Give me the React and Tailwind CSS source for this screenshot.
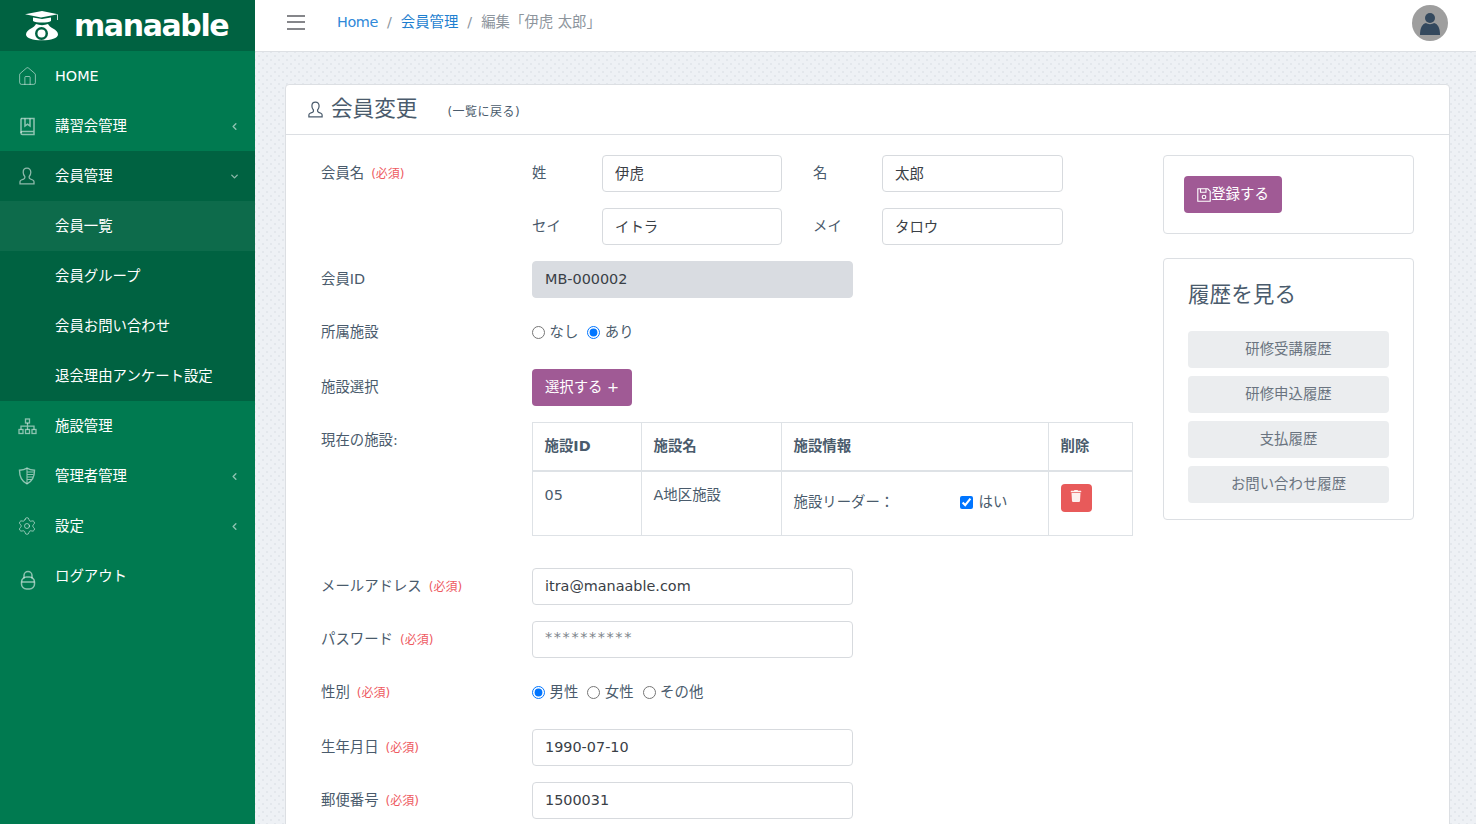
import React from 'react';
import { House, Settings, ChevronLeft, ChevronDown } from 'lucide-react';
import { FaTrash } from 'react-icons/fa';

const BookIcon = () => (
    <svg width="18" height="19" viewBox="0 0 18 19" fill="none" stroke="currentColor" strokeWidth="1.500">
        <path d="M3 1.500h13v13H4.500A1.500 1.500 0 0 0 3 16a1.500 1.500 0 0 0 1.500 1.500H16V15" />
        <path d="M3 1.500V16" />
        <path d="M7 1.500v7.500l2.500-1.800L12 9V1.500" />
    </svg>
);

const SitemapIcon = () => (
    <svg width="19" height="17" viewBox="0 0 19 17" fill="none" stroke="currentColor" strokeWidth="1.300">
        <rect x="7.500" y="1" width="4" height="4" />
        <rect x="1" y="11.500" width="4" height="4" />
        <rect x="7.500" y="11.500" width="4" height="4" />
        <rect x="14" y="11.500" width="4" height="4" />
        <path d="M9.500 5v6.500M3 11.500V8.200h13v3.300" />
    </svg>
);

const UserIcon = ({ size = 18 }) => (
    <svg width={size} height={size} viewBox="0 0 18 18" fill="none" stroke="currentColor" strokeWidth="1.300">
        <path d="M9 1.200c-2.400 0-3.800 1.700-3.800 4 0 2 .8 3.400 1.600 4.300v1.300c0 .6-.5 1-1.200 1.300L3.300 13c-.9.400-1.300 1-1.300 1.800v2h14v-2c0-.8-.4-1.400-1.300-1.800l-2.300-1c-.7-.3-1.200-.7-1.200-1.300V9.500c.8-.9 1.600-2.300 1.600-4.300 0-2.300-1.400-4-3.800-4z" />
    </svg>
);

const ShieldIcon = () => (
    <svg width="18" height="18" viewBox="0 0 18 18" fill="none" stroke="currentColor" strokeWidth="1.400">
        <path d="M9 1.200c2 1.300 4.500 2 7.500 2.100 0 6.500-1.800 11-7.500 13.500C3.300 14.300 1.500 9.800 1.500 3.300 4.500 3.200 7 2.500 9 1.200z" />
        <path d="M9 1.200v15.600M9 5h6.500M9 7.500h6.300M9 10h5.700M9 12.500h4.300" strokeWidth="1.100" />
    </svg>
);

const LockIcon = () => (
    <svg width="20" height="20" viewBox="0 0 20 20" fill="none" stroke="currentColor" strokeWidth="1.500" className="mt-[8px]">
        <rect x="3.500" y="7" width="13" height="12" rx="5" />
        <path d="M6 8.500V5.500a4 4 0 0 1 8 0v3M3.500 12h13" />
    </svg>
);

const SaveIcon = () => (
    <svg width="14" height="14" viewBox="0 0 14 14" fill="none" stroke="currentColor" strokeWidth="1.100" className="shrink-0">
        <path d="M.8.800h10l2.400 2.400v10H.8z" />
        <path d="M3.500.8v3.400h5.500V.8" />
        <circle cx="7" cy="9" r="1.800" />
    </svg>
);

const LogoMark = () => (
    <svg width="36" height="30" viewBox="0 0 36 30" fill="white">
        <path d="M1 3.200 18 0l16 3.200-17 3.300z" />
        <path d="M33 3.500h.8v5.500h-.8z" />
        <path d="M9 6.500 18 8l9-1.500V10c-3 2-15 2-18 0z" />
        <path d="M12 13c3.500 1.500 8.500 1.500 12 0 1 2 2.500 3 5 4.500 3 1.700 5 3.500 5 6 0 3.800-7 5.800-16 5.800S2 27.300 2 23.500c0-2.500 2-4.300 5-6 2.500-1.500 4-2.500 5-4.500z" />
        <circle cx="17.500" cy="22.500" r="6.500" fill="#006241" />
        <circle cx="17.500" cy="22.500" r="4" fill="white" />
    </svg>
);

const menuTop = [
    { label: 'HOME', icon: <House size={21} strokeWidth={1.100} className="-ml-[1px]" /> },
    { label: '講習会管理', icon: <BookIcon />, arrow: true },
];

const menuBottom = [
    { label: '施設管理', icon: <SitemapIcon /> },
    { label: '管理者管理', icon: <ShieldIcon />, arrow: true },
    { label: '設定', icon: <Settings size={20} strokeWidth={1.200} className="-ml-[1px]" />, arrow: true },
    { label: 'ログアウト', icon: <LockIcon /> },
];

const subMenu = ['会員一覧', '会員グループ', '会員お問い合わせ', '退会理由アンケート設定'];

const MenuItem = ({ item }) => (
    <div className="h-[50px] flex items-center text-white">
        <span className="w-[55px] pl-[18px] text-white/55 flex items-center">{item.icon}</span>
        <span className="flex-1 pt-[2px]">{item.label}</span>
        {item.arrow && <ChevronLeft size={11} strokeWidth={3} className="text-white/55 mr-[15px]" />}
    </div>
);

const Sidebar = () => (
    <aside className="w-[255px] shrink-0 bg-[#007a50] flex flex-col">
        <div className="h-[51px] bg-[#006241] flex items-center pl-[24px] gap-[14px]">
            <LogoMark />
            <span className="text-[30px] leading-none font-bold tracking-[-1.400px] text-white">manaable</span>
        </div>
        {menuTop.map(item => <MenuItem key={item.label} item={item} />)}
        <div className="bg-[#006241]">
            <div className="h-[50px] flex items-center text-white">
                <span className="w-[55px] pl-[18px] text-white/55 flex items-center"><UserIcon /></span>
                <span className="flex-1 pt-[2px]">会員管理</span>
                <ChevronDown size={11} strokeWidth={3} className="text-white/55 mr-[15px]" />
            </div>
            {subMenu.map((label, i) => (
                <div key={label} className={`h-[50px] flex items-center pl-[55px] pt-[2px] text-white ${i === 0 ? 'bg-[#0d6b4b]' : ''}`}>
                    {label}
                </div>
            ))}
        </div>
        {menuBottom.map(item => <MenuItem key={item.label} item={item} />)}
    </aside>
);

const Header = () => (
    <header className="h-[52px] shrink-0 bg-white border-b border-[#dde0e4] flex items-center">
        <div className="ml-[32px] w-[18px] flex flex-col gap-[4.500px] -mt-[7px]">
            <span className="h-[2px] bg-[#85868a]" />
            <span className="h-[2px] bg-[#85868a]" />
            <span className="h-[2px] bg-[#85868a]" />
        </div>
        <nav className="ml-[32px] flex items-center gap-[9px] -mt-[6px] text-[#8d959d]">
            <span className="text-[#2f88d8] tracking-[-0.400px]">Home</span>
            <span>/</span>
            <span className="text-[#1e7fd0]">会員管理</span>
            <span>/</span>
            <span>編集「伊虎 太郎」</span>
        </nav>
        <div className="ml-auto mr-[28px] -mt-[6px] w-[36px] h-[36px] rounded-full bg-[#9e9e9e] flex items-center justify-center overflow-hidden">
            <svg width="22" height="24" viewBox="0 0 22 24" fill="#34495e">
                <circle cx="11" cy="7" r="5" />
                <path d="M1 24c0-7 2-11 6-12 2 1.500 6 1.500 8 0 4 1 6 5 6 12z" />
            </svg>
        </div>
    </header>
);

const Required = () => <span className="ml-[7px] text-[12px] text-[#ee5a5f]">(必須)</span>;

const Field = ({ className = '', value, disabled, placeholder }) => (
    <input
        readOnly
        defaultValue={value}
        placeholder={placeholder}
        className={`h-[37px] px-3 pb-[2px] border rounded-[4px] outline-none text-[#3a4046] placeholder:text-[#7d848b] placeholder:tracking-[1.600px] ${disabled ? 'bg-[#d9dce1] border-[#d9dce1]' : 'bg-white border-[#d7dade]'} ${className}`}
    />
);

const Row = ({ label, required, className = '', labelClass = 'items-center', children }) => (
    <div className={`flex ${className}`}>
        <div className={`w-[211px] shrink-0 flex ${labelClass}`}>
            <span>{label}</span>
            {required && <Required />}
        </div>
        <div className="flex-1 flex items-center">{children}</div>
    </div>
);

const Radio = ({ name, label, checked }) => (
    <label className="flex items-center gap-[4.500px]">
        <input type="radio" name={name} defaultChecked={checked} className="w-[13px] h-[13px]" />
        <span>{label}</span>
    </label>
);

const FacilityTable = () => (
    <table className="w-[601px] border-collapse table-fixed">
        <thead>
            <tr className="h-[48px] text-left">
                <th className="w-[109px] px-[11.500px] pt-[2px] border border-[#dee2e6] border-b-[2px] font-bold">施設ID</th>
                <th className="w-[140px] px-[11.500px] pt-[2px] border border-[#dee2e6] border-b-[2px] font-bold">施設名</th>
                <th className="w-[267px] px-[11.500px] pt-[2px] border border-[#dee2e6] border-b-[2px] font-bold">施設情報</th>
                <th className="px-[11.500px] pt-[2px] border border-[#dee2e6] border-b-[2px] font-bold">削除</th>
            </tr>
        </thead>
        <tbody>
            <tr className="h-[65px] align-top">
                <td className="px-[11.500px] pt-[13px] border border-[#dee2e6]">05</td>
                <td className="px-[11.500px] pt-[13px] border border-[#dee2e6]">A地区施設</td>
                <td className="px-[11.500px] pt-[20px] border border-[#dee2e6]">
                    <div className="flex items-center">
                        <span className="w-[166px]">施設リーダー：</span>
                        <input type="checkbox" defaultChecked className="w-[13px] h-[13px] mr-[6px]" />
                        <span>はい</span>
                    </div>
                </td>
                <td className="px-[11.500px] py-3 border border-[#dee2e6]">
                    <button className="w-[31px] h-[28px] rounded-[4px] bg-[#e85a5a] text-white/90 flex items-center justify-center">
                        <FaTrash size={12} className="-mt-[3px]" />
                    </button>
                </td>
            </tr>
        </tbody>
    </table>
);

const historyLinks = ['研修受講履歴', '研修申込履歴', '支払履歴', 'お問い合わせ履歴'];

const SidePanel = () => (
    <div className="w-[251px] shrink-0 flex flex-col gap-[24px]">
        <div className="h-[79px] border border-[#dcdfe3] rounded-[4px] p-[20px]">
            <button className="h-[37px] w-[98px] rounded-[4px] bg-[#a05a95] text-white flex items-center justify-center">
                <SaveIcon />
                <span>登録する</span>
            </button>
        </div>
        <div className="border border-[#dcdfe3] rounded-[4px] px-[24px] pt-[20px] pb-[16px]">
            <h2 className="text-[21.6px] leading-[32px] mb-[20px]">履歴を見る</h2>
            <div className="flex flex-col gap-[8px]">
                {historyLinks.map(label => (
                    <button key={label} className="h-[37px] rounded-[4px] bg-[#ebedef] text-[#6a7480]">{label}</button>
                ))}
            </div>
        </div>
    </div>
);

const MemberForm = () => (
    <div className="w-[812px] shrink-0">
        <Row label="会員名" required className="mb-[16px]">
            <span className="w-[70px]">姓</span>
            <Field value="伊虎" className="w-[180px]" />
            <span className="w-[100px] pl-[31px]">名</span>
            <Field value="太郎" className="w-[181px]" />
        </Row>
        <Row label="" className="mb-[16px]">
            <span className="w-[70px]">セイ</span>
            <Field value="イトラ" className="w-[180px]" />
            <span className="w-[100px] pl-[31px]">メイ</span>
            <Field value="タロウ" className="w-[181px]" />
        </Row>
        <Row label="会員ID" className="mb-[16px]">
            <Field value="MB-000002" disabled className="w-[321px]" />
        </Row>
        <Row label="所属施設" className="mb-[18px] h-[37px]">
            <div className="flex gap-[9px]">
                <Radio name="affiliation" label="なし" />
                <Radio name="affiliation" label="あり" checked />
            </div>
        </Row>
        <Row label="施設選択" className="mb-[16px]">
            <button className="h-[37px] w-[100px] rounded-[4px] bg-[#a05a95] text-white">選択する +</button>
        </Row>
        <Row label="現在の施設:" labelClass="items-start pt-[8px]" className="mb-[32px]">
            <FacilityTable />
        </Row>
        <Row label="メールアドレス" required className="mb-[16px]">
            <Field value="itra@manaable.com" className="w-[321px]" />
        </Row>
        <Row label="パスワード" required className="mb-[16px]">
            <Field placeholder="**********" className="w-[321px] pb-[6px]" />
        </Row>
        <Row label="性別" required className="mb-[18px] h-[37px]">
            <div className="flex gap-[9px]">
                <Radio name="gender" label="男性" checked />
                <Radio name="gender" label="女性" />
                <Radio name="gender" label="その他" />
            </div>
        </Row>
        <Row label="生年月日" required className="mb-[16px]">
            <Field value="1990-07-10" className="w-[321px]" />
        </Row>
        <Row label="郵便番号" required>
            <Field value="1500031" className="w-[321px]" />
        </Row>
    </div>
);

export default function App() {
    return (
        <div className="h-[824px] w-[1476px] overflow-hidden flex text-[14.4px] leading-[1.5] text-[#4a5b6c] font-['DejaVu_Sans','Noto_Sans_CJK_JP',sans-serif]">
            <Sidebar />
            <div className="flex-1 flex flex-col min-w-0">
                <Header />
                <main className="flex-1 overflow-hidden pt-[32px] pl-[30px] pr-[26px] bg-[#eef1f5] bg-[radial-gradient(#e3e7ec_1px,transparent_1.500px),radial-gradient(#e3e7ec_1px,transparent_1.500px)] bg-[length:8px_8px] bg-[position:0_0,4px_4px]">
                    <section className="bg-white border border-[#dcdfe3] rounded-[4px] min-h-[900px]">
                        <div className="h-[50px] border-b border-[#dcdfe3] flex items-center pl-[21px]">
                            <span className="text-[#4a5b6c]"><UserIcon size={17} /></span>
                            <h1 className="ml-[7px] -mt-[2px] text-[21.6px] leading-none">会員変更</h1>
                            <span className="ml-[30px] mt-[4px] text-[12px] tracking-[0.500px]">(一覧に戻る)</span>
                        </div>
                        <div className="flex pt-[20px] pl-[35px] gap-[30px]">
                            <MemberForm />
                            <SidePanel />
                        </div>
                    </section>
                </main>
            </div>
        </div>
    );
}
